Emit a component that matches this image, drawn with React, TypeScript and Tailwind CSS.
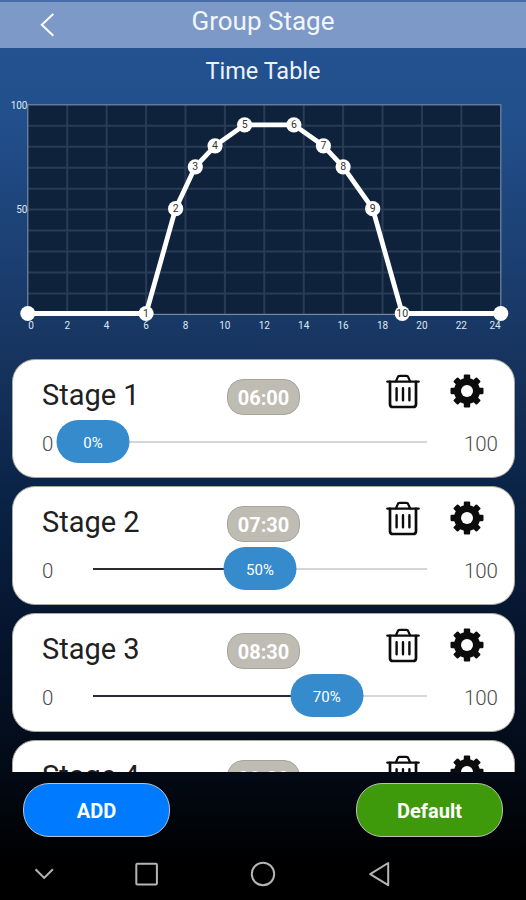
import React, { useState } from 'react';

interface Stage {
    id: number;
    time: string;
    hour: number;
    value: number;
}

const STAGES: Stage[] = [
    { id: 1, time: '06:00', hour: 6, value: 0 },
    { id: 2, time: '07:30', hour: 7.5, value: 50 },
    { id: 3, time: '08:30', hour: 8.5, value: 70 },
    { id: 4, time: '09:30', hour: 9.5, value: 80 },
    { id: 5, time: '11:00', hour: 11, value: 90 },
    { id: 6, time: '13:30', hour: 13.5, value: 90 },
    { id: 7, time: '15:00', hour: 15, value: 80 },
    { id: 8, time: '16:00', hour: 16, value: 70 },
    { id: 9, time: '17:30', hour: 17.5, value: 50 },
    { id: 10, time: '19:00', hour: 19, value: 0 },
];

// Only the rows that reach into the list viewport are mounted
const VISIBLE_ROWS = 4;

// Plot area inside the chart svg
const LEFT = 27.8;
const TOP = 9.8;
const WIDTH = 473;
const HEIGHT = 209.6;

const px = (hour: number) => LEFT + (hour / 24) * WIDTH;
const py = (value: number) => TOP + HEIGHT - (value / 100) * HEIGHT;

const TimeChart: React.FC<{ stages: Stage[] }> = ({ stages }) => {
    const line = [
        [px(0), py(0)],
        ...stages.map(s => [px(s.hour), py(s.value)]),
        [px(24), py(0)],
    ];

    return (
        <svg width="526" height="240" viewBox="0 0 526 240" className="block shrink-0 font-[Roboto,sans-serif]">
            <rect x={LEFT} y={TOP} width={WIDTH} height={HEIGHT} fill="#0f223c" />
            {Array.from({ length: 11 }, (_, i) => (
                <line key={`v${i}`} x1={px((i + 1) * 2)} x2={px((i + 1) * 2)} y1={TOP} y2={TOP + HEIGHT} stroke="#2a3c55" strokeWidth="2" />
            ))}
            {Array.from({ length: 9 }, (_, i) => (
                <line key={`h${i}`} x1={LEFT} x2={LEFT + WIDTH} y1={py((i + 1) * 10)} y2={py((i + 1) * 10)} stroke="#2a3c55" strokeWidth="2" />
            ))}
            <rect x={LEFT} y={TOP} width={WIDTH} height={HEIGHT} fill="none" stroke="#7489a8" strokeWidth="1.2" />

            {/* Axis labels */}
            <text x="27.5" y="13.7" textAnchor="end" fontSize="10" fill="#dfe7f3">100</text>
            <text x="27.5" y="117.8" textAnchor="end" fontSize="10" fill="#dfe7f3">50</text>
            {Array.from({ length: 13 }, (_, i) => (
                <text
                    key={i}
                    x={i === 0 ? 31 : i === 12 ? 495 : px(i * 2)}
                    y="233.6"
                    textAnchor="middle"
                    fontSize="10"
                    fill="#dfe7f3"
                >
                    {i * 2}
                </text>
            ))}

            <g transform="translate(0 -0.9)">
                <polyline points={line.map(p => p.join(',')).join(' ')} fill="none" stroke="#fff" strokeWidth="4.8" strokeLinejoin="round" />
                <circle cx={px(0)} cy={py(0)} r="7.5" fill="#fff" />
                <circle cx={px(24)} cy={py(0)} r="7.5" fill="#fff" />
                {stages.map(s => (
                    <g key={s.id}>
                        <circle cx={px(s.hour)} cy={py(s.value)} r="7.6" fill="#fff" />
                        <text x={px(s.hour)} y={py(s.value) + 3.6} textAnchor="middle" fontSize="10.5" fill="#333">
                            {s.id}
                        </text>
                    </g>
                ))}
            </g>
        </svg>
    );
};

const TrashIcon = () => (
    <svg width="36" height="36" viewBox="0 0 36 36" fill="none" stroke="#0c0c0c" strokeLinecap="round" strokeLinejoin="round">
        <path d="M2.4 8.6h31.2" strokeWidth="2.4" />
        <path d="M11 8.4l1.5-3.8q.6-1.7 2.3-1.7h6.4q1.7 0 2.3 1.7L25 8.4" strokeWidth="2.3" />
        <path d="M5 8.8v22.4q0 2.8 2.8 2.8h20.4q2.8 0 2.8-2.8V8.8" strokeWidth="2.7" />
        <path d="M11.6 15.3v11.9M18 15.3v11.9M24.4 15.3v11.9" strokeWidth="2.4" />
    </svg>
);

const GearIcon = () => (
    <svg width="34" height="34" viewBox="-17 -17 34 34" fill="#0c0c0c">
        {[0, 45, 90, 135].map(angle => (
            <rect key={angle} x="-3.2" y="-16.5" width="6.4" height="33" rx="1.1" transform={`rotate(${angle})`} />
        ))}
        <circle r="13" />
        <circle r="6" fill="#fff" />
    </svg>
);

const StageCard: React.FC<{ stage: Stage }> = ({ stage }) => (
    <div className="h-[119px] shrink-0 rounded-[23px] border border-[#aaa89c] bg-white pl-[29px] pr-[16px]">
        <div className="flex h-[60px] pt-[13px]">
            <div className="w-[185px] pt-[4px] text-[29px] leading-[36px] text-[#202020]">Stage {stage.id}</div>
            <div className="mt-[6px] flex h-[36px] w-[73px] items-center justify-center rounded-[16px] border border-[#a6a59b] bg-[#bebcb3] pt-px text-[20px] font-bold text-white">
                {stage.time}
            </div>
            <button className="ml-[85px] h-[36px]">
                <TrashIcon />
            </button>
            <button className="ml-[29px] mt-px h-[34px]">
                <GearIcon />
            </button>
        </div>
        <div className="flex h-[44px] items-center text-[20.5px] font-light text-[#4c4c4c]">
            <span className="w-[51px] pt-[3px]">0</span>
            <div className="relative h-[2px] w-[334px] bg-[#d6d6d6]">
                <div className="h-full bg-[#2b2b33]" style={{ width: `${stage.value}%` }} />
                <div
                    className="absolute -top-[21px] flex h-[43px] w-[73px] -translate-x-1/2 items-center justify-center rounded-[22px] bg-[#368bcd] pt-[3px] text-[15px] font-normal text-white"
                    style={{ left: `${stage.value}%` }}
                >
                    {stage.value}%
                </div>
            </div>
            <span className="flex-1 pt-[3px] text-right">100</span>
        </div>
    </div>
);

export default function App() {
    const [stages] = useState(STAGES);

    return (
        <div className="flex h-[900px] w-[526px] flex-col overflow-hidden bg-[linear-gradient(180deg,#245392_0px,#22508d_110px,#1c4175_240px,#173560_350px,#0a2447_490px,#061630_620px,#030b18_760px,#000_860px)] font-[Roboto,sans-serif]">
            {/* Header */}
            <div className="relative flex h-[48px] shrink-0 justify-center border-t-2 border-[#456ca9] bg-[#7d99c7]">
                <svg width="16" height="26" viewBox="0 0 16 26" className="absolute left-[40px] top-[10px]" fill="none" stroke="#fff" strokeWidth="2">
                    <path d="M13.3 2L1.8 12.8L13.3 23.8" />
                </svg>
                <h1 className="text-[26px] leading-[38px] text-[#f1f5fc]">Group Stage</h1>
            </div>

            <h2 className="h-[47px] shrink-0 pt-[7px] text-center text-[23.5px] leading-[32px] text-[#eef3fb]">Time Table</h2>
            <TimeChart stages={stages} />

            {/* Stage list */}
            <div className="mt-[24.4px] flex h-[412.6px] shrink-0 flex-col gap-[8px] overflow-hidden pl-[12px] pr-[11px]">
                {stages.slice(0, VISIBLE_ROWS).map(s => (
                    <StageCard key={s.id} stage={s} />
                ))}
            </div>

            {/* Actions */}
            <div className="flex shrink-0 justify-between px-[23px] pt-[11px] text-[20px] font-bold text-white">
                <button className="h-[54px] w-[147px] rounded-[26px] border-[1.5px] border-[#b9c2cc] bg-[#007bff] pt-[2px]">ADD</button>
                <button className="h-[54px] w-[147px] rounded-[26px] border-[1.5px] border-[#b9c2b0] bg-[#3e990b] pt-[2px]">Default</button>
            </div>

            {/* System navigation */}
            <div className="flex h-[63px] items-center pl-[34px] pt-[11px]">
                <svg width="372" height="28" viewBox="0 0 372 28" fill="none" stroke="#b5b5b5" strokeWidth="2">
                    <path d="M1.5 9.2l8.7 8.7l8.7-8.7" />
                    <rect x="102.3" y="3.8" width="20.6" height="20.6" rx="1" />
                    <circle cx="229" cy="14" r="11.2" />
                    <path d="M354.2 3v22.2L336.2 14.1z" strokeLinejoin="round" />
                </svg>
            </div>
        </div>
    );
}
